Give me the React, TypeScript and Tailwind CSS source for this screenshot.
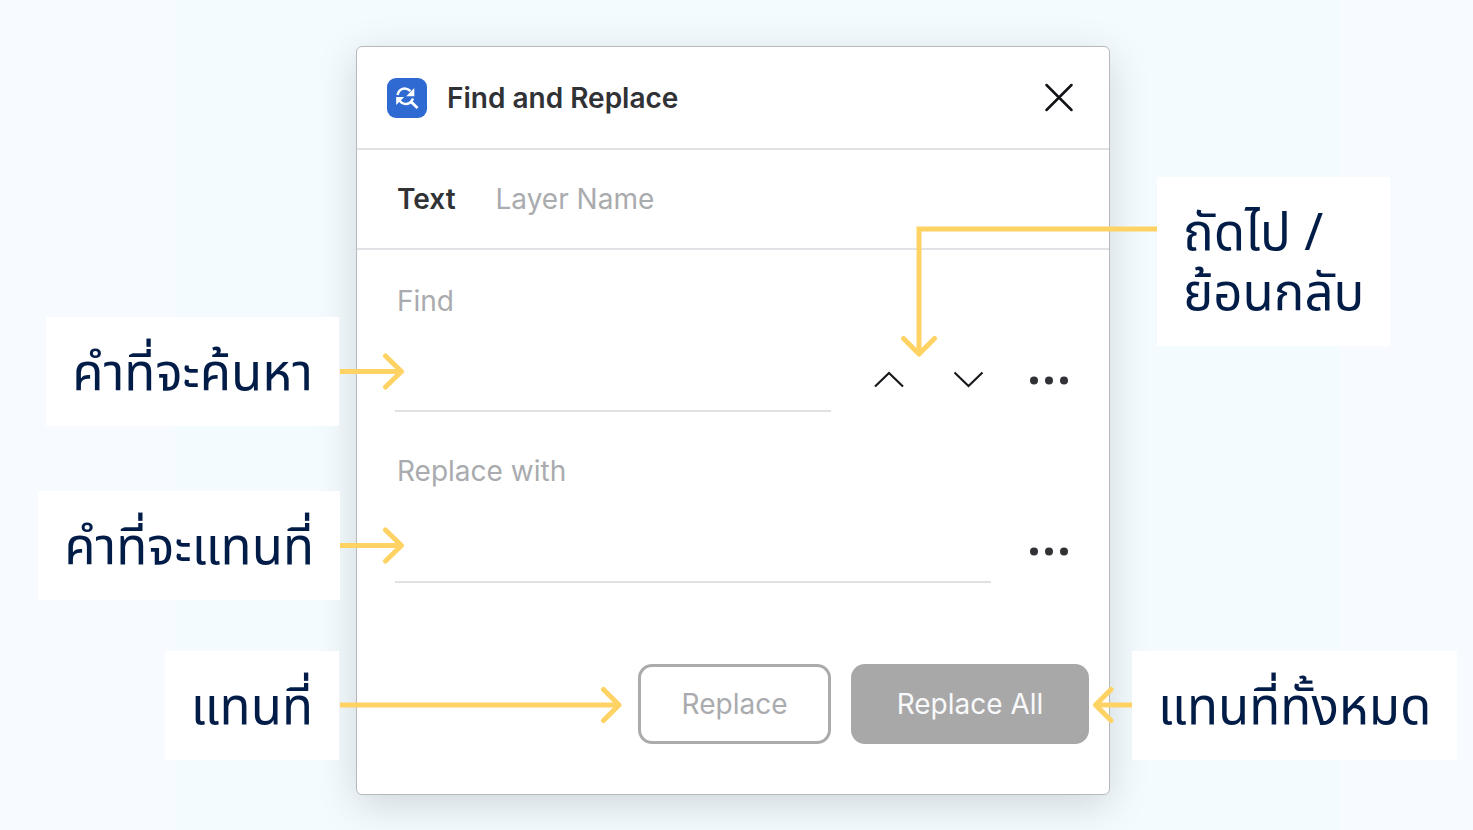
import React, { type ReactNode } from "react";

const thai = "font-['Noto_Sans_Thai','Noto_Sans_Thai_Looped','Inter','Noto_Sans',sans-serif]";

function Label({ children }: { children: ReactNode }) {
  return (
    <p
      className={`${thai} shrink-0 whitespace-nowrap bg-white px-[26px] pt-7 pb-[21px] text-[51px] leading-[60px] text-[#001c47]`}
    >
      {children}
    </p>
  );
}

function ShortArrow() {
  return (
    <svg width="65" height="40" viewBox="0 0 65 40" fill="none" stroke="#ffd264" strokeWidth="5" className="shrink-0" aria-hidden="true">
      <path d="M0 19.500H62" />
      <path d="M45.500 4L61.500 19.500L45.500 35" strokeLinecap="round" strokeLinejoin="round" />
    </svg>
  );
}

function FindReplaceIcon() {
  return (
    <svg width="40" height="40" viewBox="0 0 40 40" className="shrink-0" aria-hidden="true">
      <rect width="40" height="40" rx="9" fill="#2f69d2" />
      <g fill="none" stroke="#fff" strokeWidth="2.500">
        <path d="M10.500 17C12 10.500 18 8.500 23.500 13" />
        <path d="M12.500 22C15.500 27.500 23 27.500 26 20.500" />
        <path d="M23.800 23.500L30.500 30" strokeWidth="2.800" />
      </g>
      <path d="M27.300 10V18.200H19.200Z" fill="#fff" />
      <path d="M9.200 27V19H17.200Z" fill="#fff" />
    </svg>
  );
}

function MoreButton({ label }: { label: string }) {
  return (
    <button type="button" aria-label={label} className="flex size-20 items-center justify-center">
      <svg width="40" height="10" viewBox="0 0 40 10" fill="#303236" aria-hidden="true">
        <circle cx="5" cy="5.500" r="4" />
        <circle cx="20" cy="5.500" r="4" />
        <circle cx="35" cy="5.500" r="4" />
      </svg>
    </button>
  );
}

const inputStyle =
  "h-[72px] min-w-0 flex-1 border-b-2 border-[#dfe1e5] bg-transparent px-3 text-[28px] text-[#303236] outline-none";

export default function App() {
  return (
    <main className="grid min-h-screen grid-cols-[356fr_754fr_363fr] items-start overflow-hidden bg-[linear-gradient(90deg,#f7fbff_11.900%,#f3fbff_11.900%,#f3fbff_91%,#f7fbff_91%)] pt-[46px] pb-[35px] font-['Inter','Liberation_Sans',sans-serif]">
      <section
        aria-labelledby="dialog-title"
        className="col-start-2 min-w-0 rounded-[6px] border border-[#b5b9bc] bg-white shadow-[0_10px_40px_rgba(0,0,0,0.15)]"
      >
        <header className="flex h-[103px] items-center gap-5 border-b-2 border-[#e0e2e5] px-[30px]">
          <FindReplaceIcon />
          <h1 id="dialog-title" className="flex-1 text-[28px] leading-[34px] font-semibold text-[#303236]">
            Find and Replace
          </h1>
          <button type="button" aria-label="Close" className="flex size-10 items-center justify-center">
            <svg width="30" height="30" viewBox="0 0 30 30" fill="none" stroke="#111317" strokeWidth="2.500" strokeLinecap="round" aria-hidden="true">
              <path d="M2.500 2L27.500 27M27.500 2L2.500 27" />
            </svg>
          </button>
        </header>

        <nav className="flex h-[100px] items-center gap-10 border-b-2 border-[#e0e2e5] px-10 text-[28px] leading-[34px]">
          <button type="button" className="font-semibold text-[#303236]">
            Text
          </button>
          <button type="button" className="text-[#a9abae]">
            Layer Name
          </button>
        </nav>

        <form className="pt-[34px] pr-5 pb-[50px] pl-[38px]" onSubmit={(e) => e.preventDefault()}>
          <label htmlFor="find" className="ml-0.5 block text-[28px] leading-[34px] text-[#a9abae]">
            Find
          </label>
          <div className="relative mt-[22px] flex items-start gap-[18px]">
            <input id="find" className={inputStyle} />
            <div className="relative flex">
              <button type="button" aria-label="Previous" className="flex size-20 items-center justify-center">
                <svg width="30" height="18" viewBox="0 0 30 18" fill="none" stroke="#17191d" strokeWidth="2.200" aria-hidden="true">
                  <path d="M1 15.500L15 2L29 15.500" />
                </svg>
              </button>
              <button type="button" aria-label="Next" className="flex size-20 items-center justify-center">
                <svg width="30" height="18" viewBox="0 0 30 18" fill="none" stroke="#17191d" strokeWidth="2.200" aria-hidden="true">
                  <path d="M.5 1.500L14.500 15L28.500 1.500" />
                </svg>
              </button>
              <MoreButton label="Find options" />
              <div className="pointer-events-none absolute -top-[163px] left-[52px] flex items-start">
                <svg width="256" height="182" viewBox="0 0 256 182" fill="none" stroke="#ffd264" strokeWidth="5" className="shrink-0" aria-hidden="true">
                  <path d="M256 52H18V176" />
                  <path d="M2.500 161.500L18 177L33.500 161.500" strokeLinecap="round" strokeLinejoin="round" />
                </svg>
                <Label>
                  ถัดไป /<br />
                  ย้อนกลับ
                </Label>
              </div>
            </div>
            <div className="pointer-events-none absolute -top-[23px] right-[calc(100%-10px)] flex items-center gap-px">
              <Label>คำที่จะค้นหา</Label>
              <ShortArrow />
            </div>
          </div>

          <label htmlFor="replace" className="mt-[34px] ml-0.5 block text-[28px] leading-[34px] text-[#a9abae]">
            Replace with
          </label>
          <div className="relative mt-[23px] flex items-start gap-[18px]">
            <input id="replace" className={inputStyle} />
            <MoreButton label="Replace options" />
            <div className="pointer-events-none absolute -top-5 right-[calc(100%-10px)] flex items-center">
              <Label>คำที่จะแทนที่</Label>
              <ShortArrow />
            </div>
          </div>

          <div className="mt-[73px] flex justify-end gap-5 text-[28px] leading-[34px]">
            <div className="relative">
              <button type="button" className="h-20 w-[193px] rounded-[14px] border-3 border-[#a9abad] text-[#a9abae]">
                Replace
              </button>
              <div className="pointer-events-none absolute -top-[13px] right-full mr-4 flex items-center gap-px">
                <Label>แทนที่</Label>
                <svg width="282" height="40" viewBox="0 0 282 40" fill="none" stroke="#ffd264" strokeWidth="5" className="shrink-0" aria-hidden="true">
                  <path d="M0 19H278" />
                  <path d="M263.500 3.500L279 19L263.500 34.500" strokeLinecap="round" strokeLinejoin="round" />
                </svg>
              </div>
            </div>
            <div className="relative">
              <button type="button" className="h-20 w-[238px] rounded-[14px] bg-[#a8a8a8] text-[#f8f9fb]">
                Replace All
              </button>
              <div className="pointer-events-none absolute -top-[13px] left-full ml-1 flex items-center">
                <svg width="39" height="40" viewBox="0 0 39 40" fill="none" stroke="#ffd264" strokeWidth="5" className="shrink-0" aria-hidden="true">
                  <path d="M39 19H3" />
                  <path d="M18 3.500L2.500 19L18 34.500" strokeLinecap="round" strokeLinejoin="round" />
                </svg>
                <Label>แทนที่ทั้งหมด</Label>
              </div>
            </div>
          </div>
        </form>
      </section>
    </main>
  );
}
